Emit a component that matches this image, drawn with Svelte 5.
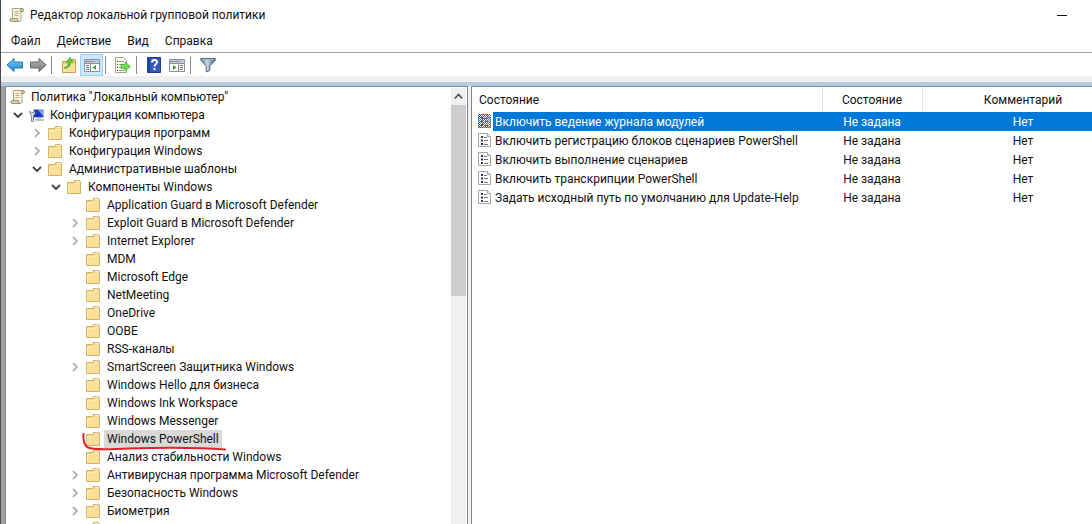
<script>
  const menus = ['Файл', 'Действие', 'Вид', 'Справка'];
  const tree = [
    { d: 0, t: 'Политика "Локальный компьютер"', icon: 'scroll' },
    { d: 1, t: 'Конфигурация компьютера', icon: 'pc', s: 'open' },
    { d: 2, t: 'Конфигурация программ', s: 'closed' },
    { d: 2, t: 'Конфигурация Windows', s: 'closed' },
    { d: 2, t: 'Административные шаблоны', s: 'open' },
    { d: 3, t: 'Компоненты Windows', s: 'open' },
    { d: 4, t: 'Application Guard в Microsoft Defender' },
    { d: 4, t: 'Exploit Guard в Microsoft Defender', s: 'closed' },
    { d: 4, t: 'Internet Explorer', s: 'closed' },
    { d: 4, t: 'MDM' },
    { d: 4, t: 'Microsoft Edge' },
    { d: 4, t: 'NetMeeting' },
    { d: 4, t: 'OneDrive' },
    { d: 4, t: 'OOBE' },
    { d: 4, t: 'RSS-каналы' },
    { d: 4, t: 'SmartScreen Защитника Windows', s: 'closed' },
    { d: 4, t: 'Windows Hello для бизнеса' },
    { d: 4, t: 'Windows Ink Workspace' },
    { d: 4, t: 'Windows Messenger' },
    { d: 4, t: 'Windows PowerShell', sel: true },
    { d: 4, t: 'Анализ стабильности Windows' },
    { d: 4, t: 'Антивирусная программа Microsoft Defender', s: 'closed' },
    { d: 4, t: 'Безопасность Windows', s: 'closed' },
    { d: 4, t: 'Биометрия', s: 'closed' },
    { d: 4, t: '' }
  ];
  const policies = [
    'Включить ведение журнала модулей',
    'Включить регистрацию блоков сценариев PowerShell',
    'Включить выполнение сценариев',
    'Включить транскрипции PowerShell',
    'Задать исходный путь по умолчанию для Update-Help'
  ];
  let selected = $state(0);
</script>

{#snippet scroll()}
  <svg class="icon" width="16" height="16" viewBox="0 0 16 16" aria-hidden="true">
    <path d="M3.500 1.500h9.500q1.500.2 1.500 1.500t-1.500 1.500h-1v8q0 2-2 2h-7.500q-1.500-.2-1.500-1.500t1.500-1.500h1V4q-1.300-1 0-2.500z" fill="#f8f1d3" stroke="#ada27f" />
    <path d="M11.500 4.500V3q.2-1.500 1.500-1.500t1.500 1.500-1.500 1.500zM3 11.500h5.500v1.500q.3 1.500 1.500 1.500H2.500Q1 14.300 1 13t1.500-1.500z" fill="#d9cfaa" stroke="#8f866a" stroke-width=".8" />
    <path d="M5.500 4.500h4M5.500 6.500h4M5.500 8.500h4" stroke="#b9b194" />
  </svg>
{/snippet}

{#snippet folder()}
  <svg class="icon" width="16" height="16" viewBox="1 0 16 16" aria-hidden="true">
    <path d="M1.500 14.500v-11h6l1-2h5l1 1v12z" fill="#f3d37c" stroke="#d3b365" />
    <path d="M10 2.500h3" stroke="#fffbe8" />
    <path d="M2 14V5h6l1-1h5v10z" fill="#fbdf96" />
    <path d="M2.500 13.500v-8h6l1-1h4" fill="none" stroke="#ffedb8" />
  </svg>
{/snippet}

{#snippet computer()}
  <svg class="icon" width="16" height="16" viewBox="0 0 16 16" aria-hidden="true">
    <path d="M4.500 2.500h10v8h-10z" fill="#1b35bd" stroke="#a9b8cc" />
    <path d="M9 3h5v6z" fill="#7f9fec" />
    <path d="M8 11h4v1h3v2H6v-2h2z" fill="#b8c0ca" />
    <path d="M1 4v3l1.500 1.500v6h2v-6L6 7V4L4.500 5.500h-2z" fill="#d5dde6" stroke="#61758c" stroke-width=".8" />
  </svg>
{/snippet}

{#snippet policy(on)}
  <svg class="icon" width="14" height="16" viewBox="0 0 14 16" aria-hidden="true">
    <path d="M.5 1.500h9l3 3v10H.5z" fill="#fff" stroke="#a5a5a5" />
    <path d="M9.500 1.500v3h3" fill="#eee" stroke="#a5a5a5" />
    <path d="M3 4h2v2H3zM3 7.500h2v2H3zM3 11h2v2H3z" fill="#333b50" />
    <path d="M6 5.500h3M6 8.500h4M6 12.500h4" stroke="#77738e" />
    {#if on}
      <defs>
        <pattern id="dither" width="2" height="2" patternUnits="userSpaceOnUse">
          <path d="M0 0h1v1H0zM1 1h1v1H1z" fill="#0078d7" />
        </pattern>
      </defs>
      <path d="M0 1h13v14H0z" fill="url(#dither)" shape-rendering="crispEdges" />
    {/if}
  </svg>
{/snippet}

<div class="desktop">
  <main class="window">
    <header class="title">
      {@render scroll()}
      <h1>Редактор локальной групповой политики</h1>
      <button class="minimize" aria-label="Свернуть"></button>
    </header>
    <nav class="menu">
      {#each menus as m}<button>{m}</button>{/each}
    </nav>
    <div class="toolbar" role="toolbar" aria-label="Инструменты">
      <button aria-label="Назад">
        <svg width="18" height="16" viewBox="0 0 18 16">
          <defs><linearGradient id="blue" x2="0" y2="1"><stop stop-color="#78d2fb" /><stop offset="1" stop-color="#1783cf" /></linearGradient></defs>
          <path d="M1 8 8 1.500v3.500h8.500v6H8v3.500z" fill="url(#blue)" stroke="#2877ae" stroke-linejoin="round" />
        </svg>
      </button>
      <button aria-label="Вперед">
        <svg width="18" height="16" viewBox="0 0 18 16">
          <defs><linearGradient id="gray" x2="0" y2="1"><stop stop-color="#b3b3b3" /><stop offset="1" stop-color="#7b7b7b" /></linearGradient></defs>
          <path d="M17 8 10 1.500v3.500H1.500v6H10v3.500z" fill="url(#gray)" stroke="#686868" stroke-linejoin="round" />
        </svg>
      </button>
      <span class="divider"></span>
      <button aria-label="На уровень вверх">
        <svg width="16" height="16" viewBox="0 0 16 16">
          <path d="M1.500 15.500v-11h6l1.500-2h5.500v13z" fill="#f0cd70" stroke="#c5a04a" />
          <path d="M2 15V7h12v8z" fill="#fbe096" />
          <path d="M3 11q4-.5 4.500-6H5l4-4.500L12 5H9.700Q9 12 3 11z" fill="#62cf3b" stroke="#329c25" stroke-width=".7" />
        </svg>
      </button>
      <button class="pressed" aria-label="Дерево консоли" aria-pressed="true">
        <svg width="16" height="16" viewBox="0 0 16 16">
          <path d="M.5 2.500h15v12H.5z" fill="#fff" stroke="#8a909c" />
          <path d="M1 3h14v3H1z" fill="#c5ccd6" />
          <path d="M1 4.500h10M1 6.500h14M6.500 7v7" stroke="#8a909c" />
          <path d="M2 8.500h3M2 10.500h3M2 12.500h3" stroke="#5b77a8" />
          <path d="M12 8v5L8.500 10.500z" fill="#35a82d" />
        </svg>
      </button>
      <span class="divider"></span>
      <button aria-label="Экспортировать список">
        <svg width="17" height="16" viewBox="0 0 17 16">
          <path d="M1.500.5h8l3 3v12h-11z" fill="#fffbea" stroke="#aaa38d" />
          <path d="M3 4.500h1M3 7.500h1M3 10.500h1M3 13.500h1" stroke="#333" />
          <path d="M5 4.500h5M5 7.500h4M5 10.500h2M5 13.500h5" stroke="#9a94aa" />
          <path d="M7 7.500h4V5l5.500 4.500L11 14v-2.500H7z" fill="#70dc50" stroke="#3fac31" stroke-width=".7" />
        </svg>
      </button>
      <span class="divider"></span>
      <button aria-label="Справка">
        <svg width="14" height="16" viewBox="0 0 14 16">
          <path d="M.5.5h13v15H.5z" fill="#3459bd" stroke="#233b8c" />
          <path d="M1 1h2v14H1z" fill="#2442a0" />
          <path d="M5 5.500Q5 3 7.500 3t2.500 2.300c0 2-2.500 2-2.500 4.200M7.500 11v2" fill="none" stroke="#fff" stroke-width="1.800" />
        </svg>
      </button>
      <button aria-label="Область действий">
        <svg width="16" height="16" viewBox="0 0 16 16">
          <path d="M.5 2.500h15v12H.5z" fill="#fff" stroke="#8a909c" />
          <path d="M1 3h14v3H1z" fill="#c5ccd6" />
          <path d="M1 4.500h10M1 6.500h14M9.500 7v7" stroke="#8a909c" />
          <path d="M11 8.500h3M11 10.500h3M11 12.500h3" stroke="#5b77a8" />
          <path d="M4 8v5l3.500-2.500z" fill="#35a82d" />
        </svg>
      </button>
      <span class="divider"></span>
      <button aria-label="Фильтр">
        <svg width="16" height="16" viewBox="0 0 16 16">
          <defs><linearGradient id="steel"><stop stop-color="#58738d" /><stop offset=".45" stop-color="#c9d9e5" /><stop offset="1" stop-color="#3f5c78" /></linearGradient></defs>
          <path d="M.8 1.500h14.400v1.800L9.800 9v4.500L6.200 15V9L.8 3.300z" fill="url(#steel)" stroke="#526b82" />
          <path d="M2 2.500h12" stroke="#a9c1d5" />
        </svg>
      </button>
    </div>
    <div class="band"></div>
    <div class="panes">
      <section class="treepane">
        <ul>
          {#each tree as n}
            <li class="d{n.d}">
              <span class="chev">
                {#if n.s === 'open'}
                  <svg width="10" height="8" viewBox="0 0 10 8"><path d="M1 2l4 4 4-4" fill="none" stroke="#404040" stroke-width="1.800" /></svg>
                {:else if n.s}
                  <svg width="8" height="10" viewBox="0 0 8 10"><path d="M2 1l4 4-4 4" fill="none" stroke="#a6a6a6" stroke-width="1.700" /></svg>
                {/if}
              </span>
              {#if n.icon === 'scroll'}{@render scroll()}{:else if n.icon}{@render computer()}{:else}{@render folder()}{/if}
              {#if n.t}<span class="label" class:sel={n.sel}>{n.t}</span>{/if}
              {#if n.sel}
                <svg class="mark" width="144" height="22" viewBox="0 0 144 22" aria-hidden="true"><path d="M1.500 2C1 8 2 13 6 15.500c7 3 22 1.500 40 1 35-1 65-1.500 97 1" fill="none" stroke="#e0202b" stroke-width="2" stroke-linecap="round" /></svg>
              {/if}
            </li>
          {/each}
        </ul>
        <div class="bar">
          <button aria-label="Прокрутить вверх"><svg width="9" height="7" viewBox="0 0 9 7"><path d="M.8 5.500l3.700-4 3.700 4" fill="none" stroke="#505050" stroke-width="1.700" /></svg></button>
          <div class="thumb"></div>
        </div>
      </section>
      <section class="list">
        <table>
          <colgroup><col class="c1" /><col class="c2" /><col class="c3" /></colgroup>
          <thead><tr><th>Состояние</th><th>Состояние</th><th>Комментарий</th></tr></thead>
          <tbody>
            {#each policies as p, i}
              <tr class:on={selected === i} onclick={() => (selected = i)}>
                <td><div class="cell"><span class="pic">{@render policy(selected === i)}</span><span class="name">{p}</span></div></td>
                <td><div class="cell mid">Не задана</div></td>
                <td><div class="cell mid">Нет</div></td>
              </tr>
            {/each}
          </tbody>
        </table>
      </section>
    </div>
  </main>
</div>

<style>
  :global(body) { margin: 0; }
  .desktop { height: 100vh; display: flex; background: #4c4a50; padding-left: 1px; box-sizing: border-box; overflow: hidden; font: 12px/18px "Segoe UI", Roboto, "Open Sans", sans-serif; color: #111; }
  .window { flex: 1; min-width: 0; display: flex; flex-direction: column; background: #fff; }
  button { font: inherit; color: inherit; border: 0; background: none; padding: 0; }
  .icon { flex: none; display: block; }
  .title { display: flex; align-items: center; height: 30px; padding-left: 8px; gap: 5px; }
  h1 { font: inherit; margin: 0; flex: 1; }
  .minimize { width: 46px; height: 30px; display: flex; align-items: center; justify-content: center; margin-right: 7px; }
  .minimize::before { content: ""; width: 10px; height: 1px; background: #111; }
  .menu { display: flex; gap: 16px; height: 22px; padding-left: 10px; align-items: center; }
  .toolbar { display: flex; align-items: center; height: 23px; border-top: 1px solid #a0a0a0; padding-left: 2px; }
  .toolbar button { width: 23px; height: 22px; display: flex; align-items: center; justify-content: center; }
  .toolbar .pressed { background: #cce8ff; box-shadow: inset 0 0 0 1px #99d1ff; }
  .divider { width: 1px; height: 18px; background: #8c8c8c; margin: 0 5px 0 2px; }
  .band { height: 6px; background: #f0f0f0; border-bottom: 4px solid #b4cde6; }
  .panes { flex: 1; min-height: 0; display: flex; gap: 3px; padding-left: 4px; background: linear-gradient(to right, #a3a0a1 4px, #f0f0f0 4px); }
  .treepane { flex: none; width: 463px; box-sizing: border-box; border: 1px solid #828790; border-bottom: 0; background: #fff; display: flex; padding: 1px 1px 0 0; overflow: hidden; }
  ul { flex: 1; list-style: none; margin: 0; padding: 0; min-width: 0; }
  li { display: flex; align-items: center; height: 18px; position: relative; white-space: nowrap; }
  .d0 { margin-left: -15px; }
  .d1 { margin-left: 4px; }
  .d2 { margin-left: 23px; }
  .d3 { margin-left: 42px; }
  .d4 { margin-left: 61px; }
  .chev { width: 15px; margin-right: 4px; display: flex; align-items: center; justify-content: center; }
  .label { margin-left: 2px; padding: 0 3px; }
  .sel { background: #d9d9d9; }
  .mark { position: absolute; left: 15px; top: 2px; }
  .bar { width: 15px; background: #f0f0f0; display: flex; flex-direction: column; }
  .bar button { height: 17px; display: flex; align-items: center; justify-content: center; }
  .thumb { height: 191px; background: #cdcdcd; }
  .list { flex: 1; min-width: 0; overflow: hidden; border: solid #828790; border-width: 1px 0 0 1px; background: #fff; }
  table { border-collapse: collapse; table-layout: fixed; width: 652px; }
  .c1 { width: 350px; }
  .c2 { width: 100px; }
  .c3 { width: 202px; }
  th { font-weight: normal; height: 25px; padding: 0; border-right: 1px solid #e2e2e2; }
  th:first-child { text-align: left; padding-left: 7px; }
  td { padding: 0; }
  .cell { display: flex; height: 19px; line-height: 20px; }
  .mid { justify-content: center; }
  .pic { padding: 1px 1px 0 6px; }
  .name { flex: 1; padding-left: 2px; white-space: nowrap; }
  .on td { background: #0078d7; color: #fff; }
  .on .pic { background: #fff; }
</style>
